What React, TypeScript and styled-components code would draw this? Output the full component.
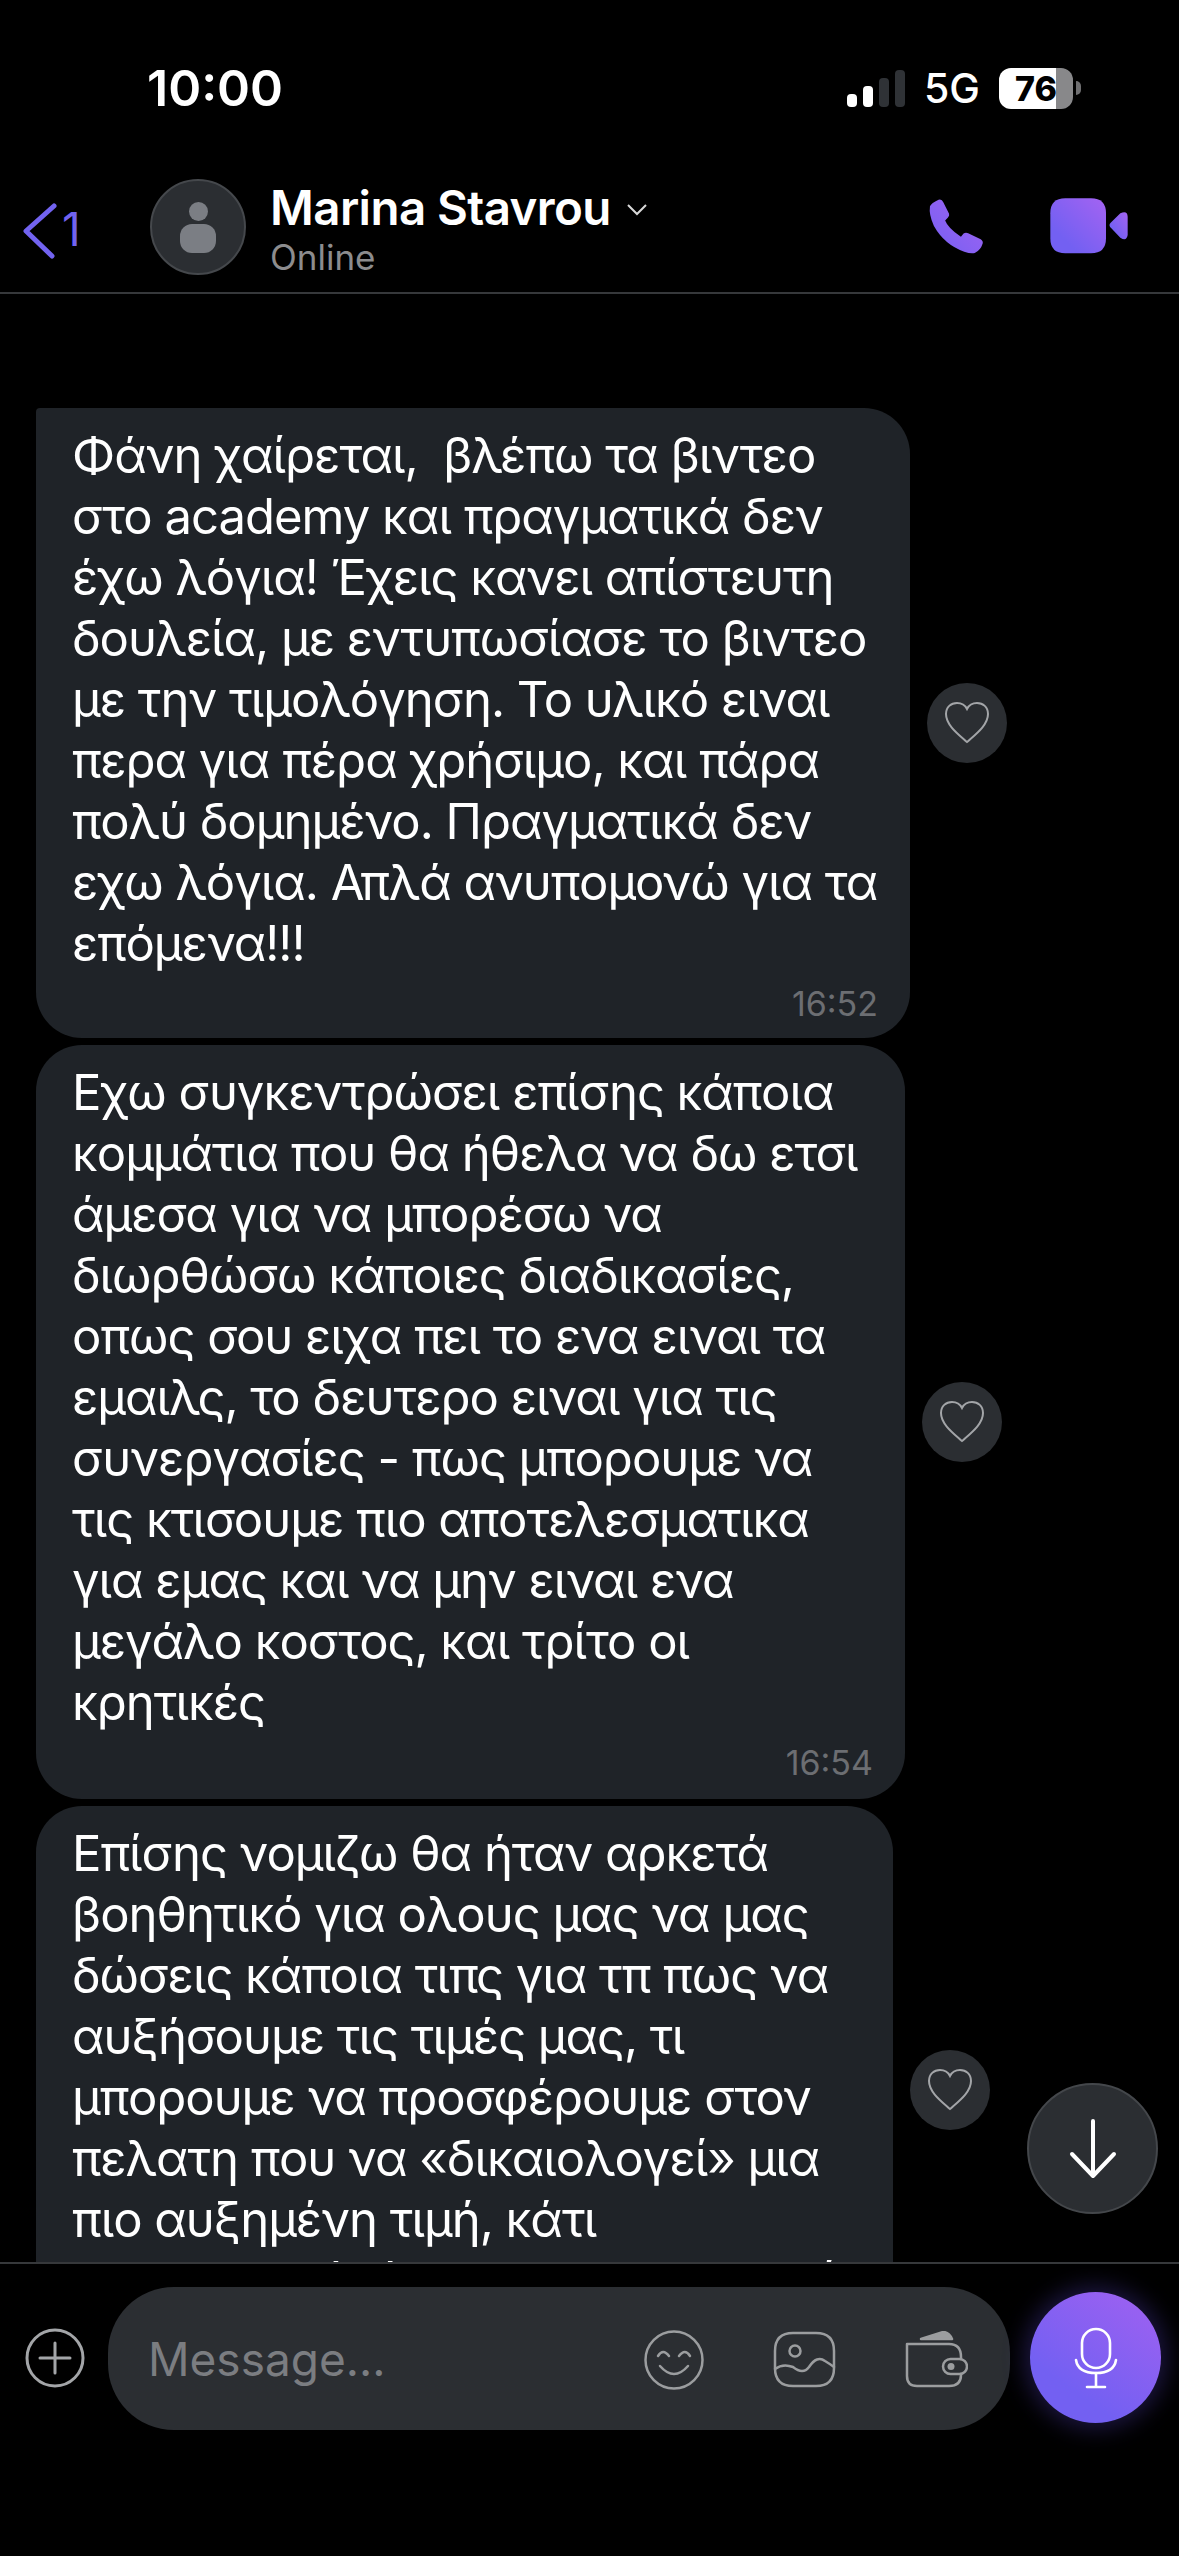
import styled, { createGlobalStyle } from "styled-components"

const GlobalStyle = createGlobalStyle`
	html, body {
		margin: 0;
		padding: 0;
		background: #000;
	}
	* {
		box-sizing: border-box;
	}
`

const Page = styled.div`
	width: 1179px;
	height: 2556px;
	display: flex;
	flex-direction: column;
	background: #000;
	color: #fff;
	font-family: Inter, "Noto Sans", "Liberation Sans", sans-serif;
	overflow: hidden;
`

const StatusBar = styled.div`
	height: 160px;
	flex: none;
	display: flex;
	align-items: center;
	justify-content: space-between;
	padding: 16px 98px 0 147px;
`

const Time = styled.div`
	font-size: 50px;
	font-weight: 600;
`

const StatusRight = styled.div`
	display: flex;
	align-items: center;
`

const SignalBars = styled.div`
	display: flex;
	align-items: flex-end;
	gap: 6px;
	height: 38px;
	margin-right: 19px;
`

const SignalBar = styled.div<{ $h: number; $on?: boolean }>`
	width: 10px;
	height: ${(p) => p.$h}px;
	border-radius: 4px;
	background: ${(p) => (p.$on ? "#fff" : "#2f3236")};
`

const Network = styled.div`
	font-size: 41px;
	font-weight: 500;
	margin-right: 19px;
`

const Battery = styled.div`
	width: 74px;
	height: 41px;
	border-radius: 12px;
	background: linear-gradient(90deg, #fff 77%, #88888a 77%);
	color: #000;
	font-size: 34px;
	font-weight: 800;
	display: flex;
	align-items: center;
	justify-content: center;
`

const BatteryNub = styled.div`
	width: 5px;
	height: 14px;
	margin-left: 3px;
	border-radius: 0 6px 6px 0;
	background: #6f6f71;
`

const Header = styled.div`
	height: 134px;
	flex: none;
	display: flex;
	align-items: flex-start;
	padding: 19px 50px 0 22px;
	border-bottom: 2px solid #36383b;
`

const BackLink = styled.div`
	width: 128px;
	display: flex;
	align-items: flex-start;
	padding-top: 24px;
	color: #7263f0;
	font-size: 46px;
	line-height: 46px;
`

const BackCount = styled.span`
	margin-left: 4px;
	margin-top: 3px;
`

const Avatar = styled.div`
	width: 96px;
	height: 96px;
	flex: none;
	border-radius: 50%;
	background: #2b2e32;
	border: 2px solid #45484c;
	display: flex;
	flex-direction: column;
	align-items: center;
	padding-top: 21px;
	gap: 3px;
`

const AvatarHead = styled.div`
	width: 19px;
	height: 19px;
	border-radius: 50%;
	background: #7b7e84;
`

const AvatarBody = styled.div`
	width: 36px;
	height: 29px;
	border-radius: 12px;
	background: #7b7e84;
`

const Contact = styled.div`
	flex: 1;
	margin-left: 24px;
`

const NameRow = styled.div`
	display: flex;
	align-items: center;
	gap: 15px;
	height: 56px;
`

const Name = styled.div`
	font-size: 47.5px;
	font-weight: 600;
	letter-spacing: -0.6px;
`

const ChevronSlot = styled.div`
	display: flex;
	padding-top: 5px;
`

const Presence = styled.div`
	font-size: 35px;
	line-height: 44px;
	color: #8c8c8e;
`

const CallButtons = styled.div`
	display: flex;
	align-items: center;
	gap: 66px;
	padding-top: 19px;
`

const Messages = styled.div`
	position: relative;
	flex: 1;
	min-height: 0;
	overflow: hidden;
	display: flex;
	flex-direction: column;
	gap: 7px;
	padding: 114px 0 0 36px;
`

const Row = styled.div`
	display: flex;
	align-items: center;
	flex: none;
	gap: 17px;
`

const Bubble = styled.div<{ $width: number; $first?: boolean; $tailH: number }>`
	width: ${(p) => p.$width}px;
	flex: none;
	padding: 17px 32px ${(p) => p.$tailH}px 36px;
	background: #1f2328;
	border-radius: ${(p) => (p.$first ? "4px" : "46px")} 46px 46px 46px;
`

const Line = styled.div`
	font-size: 49px;
	line-height: 61px;
	letter-spacing: -1px;
	white-space: pre;
`

const Stamp = styled.div`
	margin-top: 12px;
	text-align: right;
	font-size: 34px;
	line-height: 36px;
	color: #6c6e72;
`

const HeartButton = styled.div`
	width: 80px;
	height: 80px;
	flex: none;
	border-radius: 50%;
	background: #2b2e32;
	display: flex;
	align-items: center;
	justify-content: center;
`

const ScrollDown = styled.div`
	position: absolute;
	right: 21px;
	bottom: 48px;
	width: 131px;
	height: 131px;
	border-radius: 50%;
	background: #2b2e32;
	border: 2px solid #44474b;
	display: flex;
	align-items: center;
	justify-content: center;
`

const Composer = styled.div`
	height: 294px;
	flex: none;
	display: flex;
	align-items: flex-start;
	padding: 23px 18px 0 25px;
	border-top: 2px solid #36383b;
`

const PlusButton = styled.div`
	margin-top: 41px;
	width: 60px;
	height: 60px;
	flex: none;
	display: flex;
`

const InputBox = styled.div`
	margin-left: 23px;
	width: 902px;
	height: 143px;
	flex: none;
	border-radius: 66px;
	background: #2b2e32;
	display: flex;
	align-items: center;
	padding: 0 42px 0 40px;
`

const Placeholder = styled.div`
	flex: 1;
	font-size: 46px;
	color: #7b7d81;
`

const InputIcons = styled.div`
	display: flex;
	align-items: center;
	gap: 69px;
	padding-top: 2px;
`

const MicButton = styled.div`
	margin: 5px 0 0 20px;
	width: 131px;
	height: 131px;
	flex: none;
	border-radius: 50%;
	background: linear-gradient(215deg, #a161f1 0%, #7360f2 72%);
	box-shadow: 0 0 22px 6px rgba(100, 80, 230, 0.28);
	display: flex;
	align-items: center;
	justify-content: center;
`

const firstMessage = [
	"Φάνη χαίρεται,  βλέπω τα βιντεο",
	"στο academy και πραγματικά δεν",
	"έχω λόγια! Έχεις κανει απίστευτη",
	"δουλεία, με εντυπωσίασε το βιντεο",
	"με την τιμολόγηση. Το υλικό ειναι",
	"περα για πέρα χρήσιμο, και πάρα",
	"πολύ δομημένο. Πραγματικά δεν",
	"εχω λόγια. Απλά ανυπομονώ για τα",
	"επόμενα!!!",
]

const secondMessage = [
	"Εχω συγκεντρώσει επίσης κάποια",
	"κομμάτια που θα ήθελα να δω ετσι",
	"άμεσα για να μπορέσω να",
	"διωρθώσω κάποιες διαδικασίες,",
	"οπως σου ειχα πει το ενα ειναι τα",
	"εμαιλς, το δευτερο ειναι για τις",
	"συνεργασίες - πως μπορουμε να",
	"τις κτισουμε πιο αποτελεσματικα",
	"για εμας και να μην ειναι ενα",
	"μεγάλο κοστος, και τρίτο οι",
	"κρητικές",
]

const thirdMessage = [
	"Επίσης νομιζω θα ήταν αρκετά",
	"βοηθητικό για ολους μας να μας",
	"δώσεις κάποια τιπς για τπ πως να",
	"αυξήσουμε τις τιμές μας, τι",
	"μπορουμε να προσφέρουμε στον",
	"πελατη που να «δικαιολογεί» μια",
	"πιο αυξημένη τιμή, κάτι",
	"διαφορετικό, όπως μια συνεργασία",
]

function HeartIcon() {
	return (
		<svg width="46" height="44" viewBox="0 0 46 44" fill="none">
			<path
				d="M23 41 C14 33 2 24 2 13 C2 6 7 2 13 2 C17 2 21 4 23 8 C25 4 29 2 33 2 C39 2 44 6 44 13 C44 24 32 33 23 41 Z"
				stroke="#a3a5a8"
				strokeWidth="2"
			/>
		</svg>
	)
}

function App() {
	return (
		<Page>
			<GlobalStyle />
			<StatusBar>
				<Time>10:00</Time>
				<StatusRight>
					<SignalBars>
						<SignalBar $h={13} $on />
						<SignalBar $h={21} $on />
						<SignalBar $h={29} />
						<SignalBar $h={37} />
					</SignalBars>
					<Network>5G</Network>
					<Battery>76</Battery>
					<BatteryNub />
				</StatusRight>
			</StatusBar>

			<Header>
				<BackLink>
					<svg width="36" height="56" viewBox="0 0 36 56" fill="none">
						<path d="M32 3 L4 28 L30 53" stroke="#7263f0" strokeWidth="5" strokeLinecap="round" strokeLinejoin="round" />
					</svg>
					<BackCount>1</BackCount>
				</BackLink>
				<Avatar>
					<AvatarHead />
					<AvatarBody />
				</Avatar>
				<Contact>
					<NameRow>
						<Name>Marina Stavrou</Name>
						<ChevronSlot>
							<svg width="22" height="13" viewBox="0 0 22 13" fill="none">
								<path d="M2 2 L11 11 L20 2" stroke="#d8d8d8" strokeWidth="2" />
							</svg>
						</ChevronSlot>
					</NameRow>
					<Presence>Online</Presence>
				</Contact>
				<CallButtons>
					<svg width="56" height="56" viewBox="90 80 170 170">
						<defs>
							<linearGradient id="phoneFill" x1="1" y1="0" x2="0" y2="1">
								<stop offset="0" stopColor="#a463f2" />
								<stop offset="1" stopColor="#7360f2" />
							</linearGradient>
						</defs>
						<path
							fill="url(#phoneFill)"
							d="M96 105 Q100 95 122 85 Q132 82 136 92 L154 128 Q156 134 150 140 L142 148 Q150 170 190 198 L198 188 Q204 184 212 187 L250 205 Q258 210 256 218 Q250 238 232 247 Q220 250 200 243 Q140 222 108 165 Q92 130 96 105 Z"
						/>
					</svg>
					<svg width="79" height="56" viewBox="455 84 235 168">
						<defs>
							<linearGradient id="videoFill" x1="1" y1="0" x2="0" y2="1">
								<stop offset="0" stopColor="#a463f2" />
								<stop offset="0.75" stopColor="#7360f2" />
							</linearGradient>
						</defs>
						<path
							fill="url(#videoFill)"
							d="M500 85 L577 85 Q622 85 622 130 L622 205 Q622 250 577 250 L500 250 Q455 250 455 205 L455 130 Q455 85 500 85 Z"
						/>
						<path
							fill="url(#videoFill)"
							d="M636 158 L665 130 Q686 120 687 140 L687 195 Q684 215 665 203 L638 175 Q628 166 636 158 Z"
						/>
					</svg>
				</CallButtons>
			</Header>

			<Messages>
				<Row>
					<Bubble $width={874} $first $tailH={16}>
						{firstMessage.map((line) => (
							<Line key={line}>{line}</Line>
						))}
						<Stamp>16:52</Stamp>
					</Bubble>
					<HeartButton>
						<HeartIcon />
					</HeartButton>
				</Row>
				<Row>
					<Bubble $width={869} $tailH={18}>
						{secondMessage.map((line) => (
							<Line key={line}>{line}</Line>
						))}
						<Stamp>16:54</Stamp>
					</Bubble>
					<HeartButton>
						<HeartIcon />
					</HeartButton>
				</Row>
				<Row>
					<Bubble $width={857} $tailH={63}>
						{thirdMessage.map((line) => (
							<Line key={line}>{line}</Line>
						))}
					</Bubble>
					<HeartButton>
						<HeartIcon />
					</HeartButton>
				</Row>
				<ScrollDown>
					<svg width="50" height="60" viewBox="0 0 50 60" fill="none">
						<path d="M25 2 L25 56 M4 35 L25 57 L46 35" stroke="#fff" strokeWidth="4" strokeLinecap="round" strokeLinejoin="round" />
					</svg>
				</ScrollDown>
			</Messages>

			<Composer>
				<PlusButton>
					<svg width="60" height="60" viewBox="0 0 60 60" fill="none" stroke="#a3a5a8" strokeWidth="3">
						<circle cx="30" cy="30" r="28" />
						<path d="M30 15 L30 45 M15 30 L45 30" strokeLinecap="round" />
					</svg>
				</PlusButton>
				<InputBox>
					<Placeholder>Message...</Placeholder>
					<InputIcons>
						<svg width="60" height="60" viewBox="0 0 60 60" fill="none" stroke="#9b9d9f" strokeWidth="2.5" strokeLinecap="round">
							<circle cx="30" cy="30" r="28.5" />
							<path d="M14 26 Q19 18 25 26 M35 26 Q41 18 46 26" />
							<path d="M16 36 Q30 52 44 36" />
						</svg>
						<svg width="63" height="57" viewBox="0 0 63 57" fill="none" stroke="#9b9d9f" strokeWidth="2.5" strokeLinecap="round">
							<path d="M20 2 L43 2 Q61 2 61 20 L61 37 Q61 55 43 55 L20 55 Q2 55 2 37 L2 20 Q2 2 20 2 Z" />
							<circle cx="22" cy="20" r="5.5" />
							<path d="M2 38 Q10 32 20 36 Q30 44 36 36 Q44 24 52 30 Q57 33 61 36" />
						</svg>
						<svg width="63" height="57" viewBox="0 0 63 57" fill="none" stroke="#9b9d9f" strokeWidth="2.5" strokeLinecap="round" strokeLinejoin="round">
							<path d="M16 8 L38 1 Q44 1 47 8 Z" fill="#9b9d9f" />
							<path d="M56 28 L56 26 Q56 13 44 13 L2 13 L2 45 Q2 55 12 55 L44 55 Q56 55 56 44 L56 43" />
							<rect x="38" y="28" width="24" height="15" rx="7.5" />
							<circle cx="46" cy="35.5" r="3.5" fill="#9b9d9f" stroke="none" />
						</svg>
					</InputIcons>
				</InputBox>
				<MicButton>
					<svg width="44" height="62" viewBox="0 0 44 62" fill="none" stroke="#fff" strokeWidth="2.6" strokeLinecap="round">
						<rect x="8" y="2" width="28" height="39" rx="14" />
						<path d="M2 33 Q4 46 22 46 Q40 46 42 33" />
						<path d="M22 46 L22 60 M13 60 L31 60" />
					</svg>
				</MicButton>
			</Composer>
		</Page>
	)
}

export default App
